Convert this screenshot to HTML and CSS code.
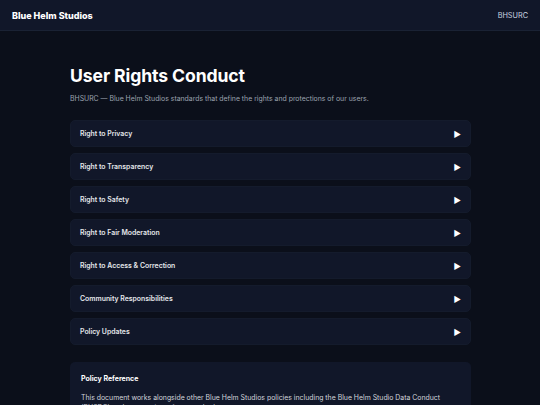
FILE: index.html
```html
<!DOCTYPE html>
<html>
<head>
    <meta charset="UTF-8">
    <meta name="viewport" content="width=device-width, initial-scale=1.0">
    <title>User Rights Conduct</title>
    <link rel="stylesheet" href="styles.css">
</head>
<body>
    <header class="site-header">
        <span class="brand">Blue Helm Studios</span>
        <span class="tag">BHSURC</span>
    </header>

    <main class="page">
        <h1>User Rights Conduct</h1>
        <p class="lead">BHSURC — Blue Helm Studios standards that define the rights and protections of our users.</p>

        <!-- Secciones desplegables -->
        <div class="sections">
            <div class="section"><span>Right to Privacy</span><span class="arrow">▶</span></div>
            <div class="section"><span>Right to Transparency</span><span class="arrow">▶</span></div>
            <div class="section"><span>Right to Safety</span><span class="arrow">▶</span></div>
            <div class="section"><span>Right to Fair Moderation</span><span class="arrow">▶</span></div>
            <div class="section"><span>Right to Access &amp; Correction</span><span class="arrow">▶</span></div>
            <div class="section"><span>Community Responsibilities</span><span class="arrow">▶</span></div>
            <div class="section"><span>Policy Updates</span><span class="arrow">▶</span></div>
        </div>

        <div class="reference">
            <h2>Policy Reference</h2>
            <p>This document works alongside other Blue Helm Studios policies including the Blue Helm Studio Data Conduct (BHSDC) and community safety standards.</p>
        </div>
    </main>
</body>
</html>
```

FILE: styles.css
```css
body {
    margin: 0;
    padding: 0;
    background: #0b0f1a;
    color: #e5e7eb;
    font-family: Inter, "Noto Sans", sans-serif;
    overflow: hidden;
}

.site-header {
    height: 30px;
    background: #111729;
    border-bottom: 1px solid #1a2234;
    display: flex;
    align-items: center;
    justify-content: space-between;
    padding: 0 12px;
}

.brand {
    font-weight: 800;
    font-size: 9px;
    color: #ffffff;
}

.tag {
    font-size: 7.3px;
    color: #cbd5e1;
}

.page {
    width: 401px;
    margin: 0 auto;
    padding-top: 34px;
    padding-left: 1px;
}

h1 {
    margin: 0;
    font-size: 17.6px;
    font-weight: 700;
    color: #ffffff;
    letter-spacing: -0.1px;
}

.lead {
    margin: 8px 0 17px;
    font-size: 6.9px;
    color: #9ca3af;
}

.sections {
    display: flex;
    flex-direction: column;
    gap: 6px;
}

.section {
    height: 27px;
    background: #111729;
    border: 1px solid #141b2c;
    box-sizing: border-box;
    border-radius: 5px;
    display: flex;
    align-items: center;
    justify-content: space-between;
    padding: 0 9px;
    font-size: 6.9px;
    font-weight: 600;
    color: #e5e7eb;
}

.arrow {
    font-size: 8px;
    color: #ffffff;
}

.reference {
    margin-top: 17px;
    background: #111729;
    border-radius: 5px;
    padding: 12px 11px;
}

.reference h2 {
    margin: 0 0 10px;
    font-size: 7px;
    font-weight: 700;
    color: #ffffff;
}

.reference p {
    margin: 0;
    font-size: 6.9px;
    line-height: 1.5;
    color: #d1d5db;
}
```
